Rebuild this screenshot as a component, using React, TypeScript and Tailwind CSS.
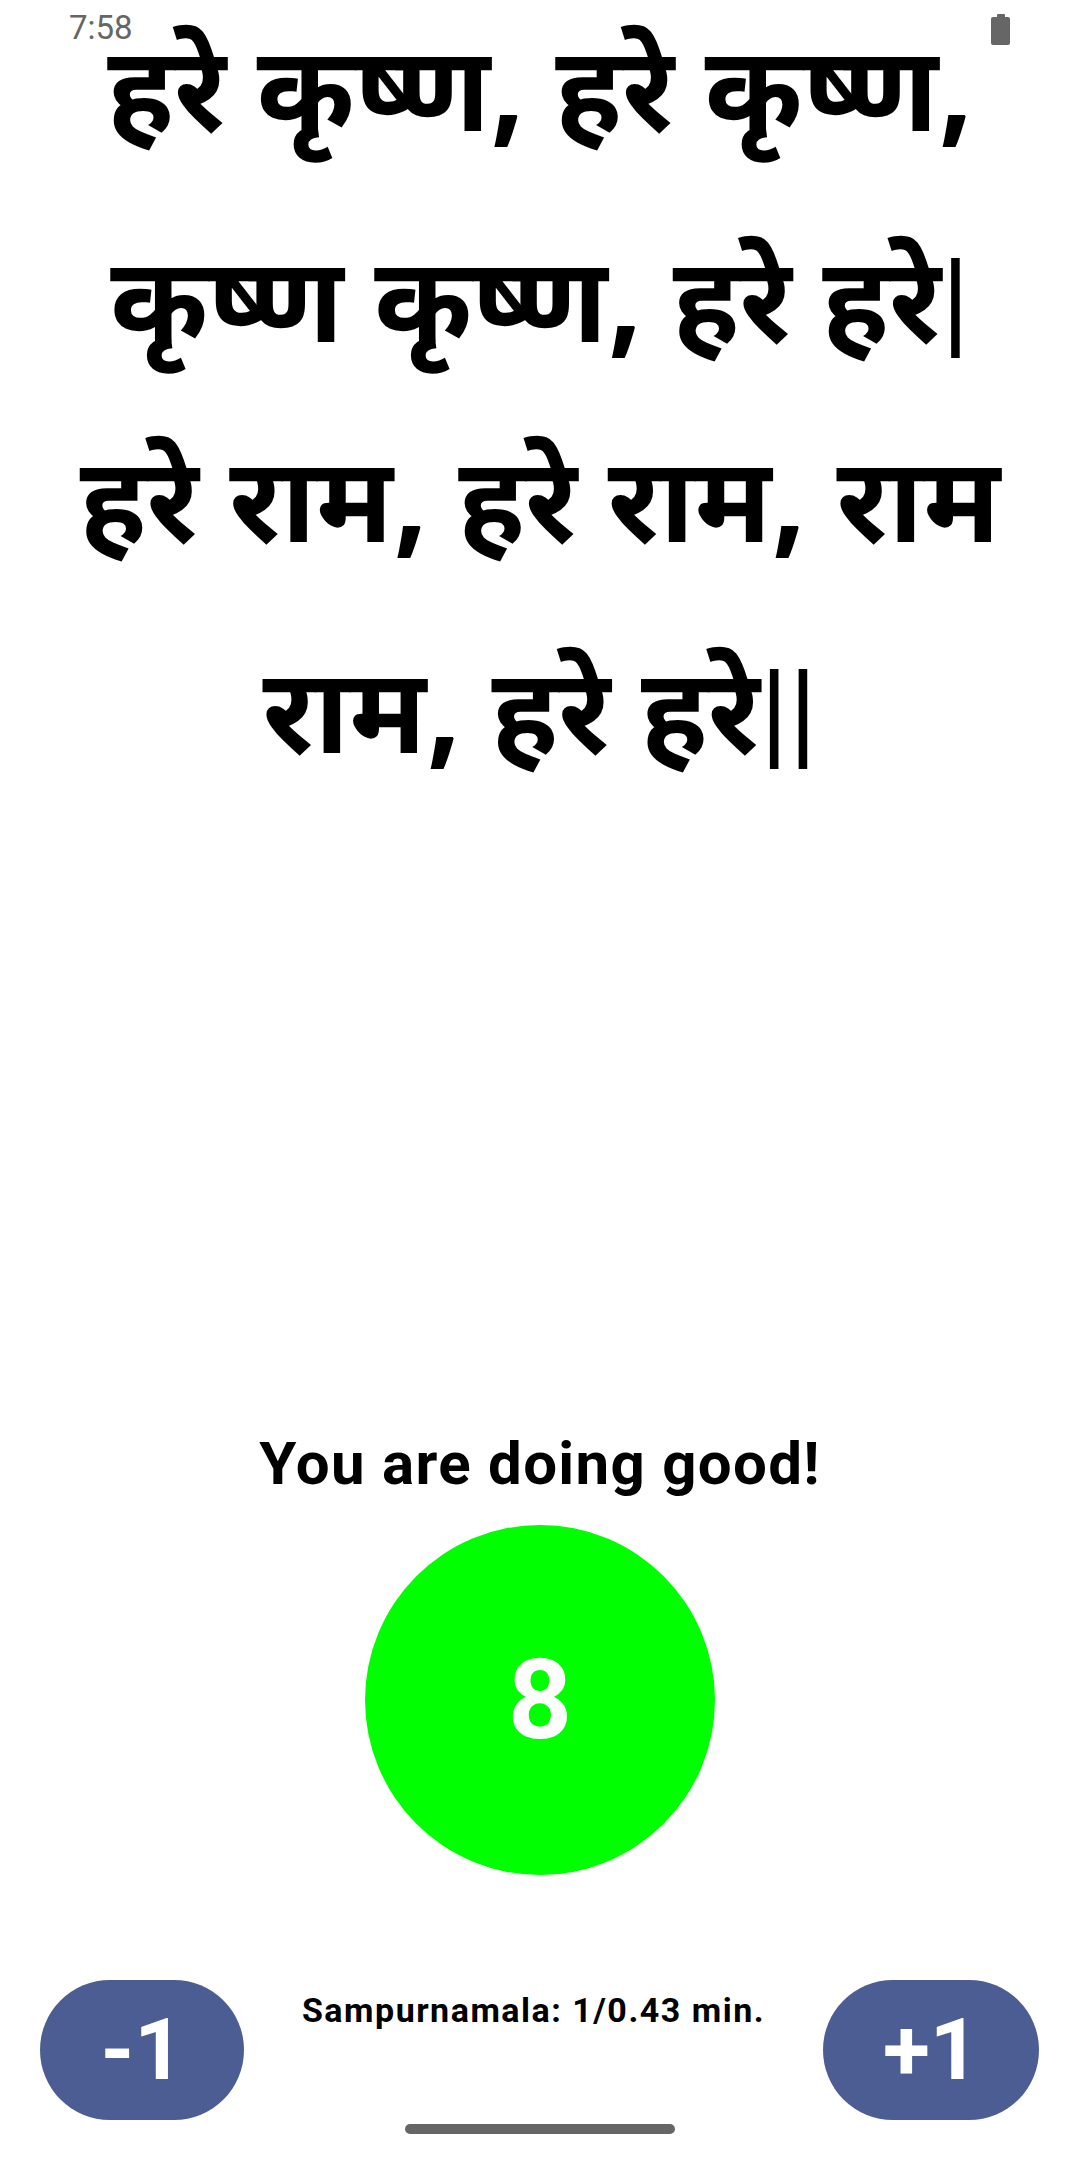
import React from 'react';

// each line is split so the ASCII bars can use a thin Roboto stroke like the device does
const lines: { text: string; bars?: string }[] = [
  { text: 'हरे कृष्ण, हरे कृष्ण,' },
  { text: 'कृष्ण कृष्ण, हरे हरे', bars: '|' },
  { text: 'हरे राम, हरे राम, राम' },
  { text: 'राम, हरे हरे', bars: '||' },
];

function StatusBar() {
  return (
    <div className="absolute top-0 left-0 right-0 h-[60px] flex items-start justify-between pl-[69px] pr-[70px]">
      <span className="mt-[9px] text-[33px] leading-[38px] text-[#666666] font-['Roboto',sans-serif]">7:58</span>
      <div className="mt-[14px] flex flex-col items-center">
        <div className="w-[8px] h-[3px] bg-[#666666] rounded-t-[1px]" />
        <div className="w-[19px] h-[28px] bg-[#666666] rounded-[2px]" />
      </div>
    </div>
  );
}

function StepButton({ label, width }: { label: string; width: string }) {
  return (
    <button className={`${width} h-[140px] rounded-full bg-[#4b5d93] flex items-center justify-center text-white text-[86px] font-bold leading-none font-['Roboto',sans-serif]`}>
      {label}
    </button>
  );
}

export default function App() {
  return (
    <div className="relative w-[1080px] h-[2160px] bg-white flex flex-col overflow-hidden">
      <StatusBar />

      <div className="mt-[2px] px-[30px] text-center text-black font-bold text-[118px] leading-[200px] font-['Noto_Sans_Devanagari','Noto_Sans',sans-serif]">
        {lines.map((line, i) => (
          <div key={i}>
            {line.text}
            {line.bars && <span className="font-normal font-['Roboto',sans-serif]">{line.bars}</span>}
          </div>
        ))}
      </div>

      <div className="flex-1" />

      <div className="flex flex-col items-center">
        <p className="text-[60px] leading-[68px] font-bold tracking-[1.3px] text-black font-['Roboto',sans-serif]">You are doing good!</p>
        <div className="mt-[27px] w-[350px] h-[350px] rounded-full bg-[#00ff00] flex items-center justify-center">
          <span className="text-white text-[112px] font-bold leading-none font-['Roboto',sans-serif]">8</span>
        </div>
      </div>

      <div className="mt-[105px] mb-[40px] flex items-start justify-between pl-[40px] pr-[41px]">
        <StepButton label="-1" width="w-[204px]" />
        <p className="mt-[10px] text-[34px] leading-[40px] font-bold tracking-[1.5px] text-black font-['Roboto',sans-serif]">
          Sampurnamala: 1/0.43 min.
        </p>
        <StepButton label="+1" width="w-[216px]" />
      </div>

      <div className="absolute bottom-[26px] left-1/2 -translate-x-1/2 w-[270px] h-[10px] rounded-full bg-[#666666]" />
    </div>
  );
}
